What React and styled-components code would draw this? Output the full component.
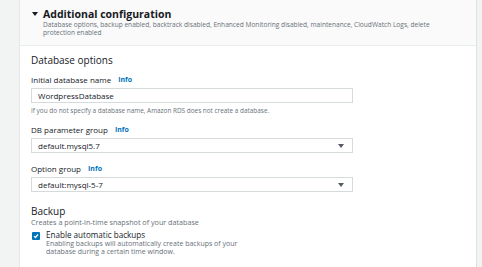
import styled, { createGlobalStyle } from "styled-components";

const GlobalStyle = createGlobalStyle`
  html, body {
    margin: 0;
    padding: 0;
    background: #f2f3f3;
  }
  body {
    font-family: "Open Sans", "Liberation Sans", sans-serif;
    color: #16191f;
  }
`;

const Page = styled.div`
  display: flex;
  width: 482px;
  height: 267px;
  overflow: hidden;
`;

const Gutter = styled.div`
  width: ${(props) => props.w}px;
  flex-shrink: 0;
  background: #f2f3f3;
`;

const Panel = styled.div`
  flex: 1;
  background: #ffffff;
  border-left: 1px solid #e4e7e7;
  border-right: 1px solid #dfe2e2;
`;

const Header = styled.div`
  height: 46px;
  box-sizing: border-box;
  background: #fafafa;
  border-bottom: 1px solid #eaeded;
  padding: 7px 12px 0 12px;
  display: flex;
  gap: 5px;
`;

const Caret = styled.span`
  width: 0;
  height: 0;
  margin-top: 5px;
  border-left: 3px solid transparent;
  border-right: 3px solid transparent;
  border-top: 4px solid #16191f;
`;

const HeaderText = styled.div`
  display: flex;
  flex-direction: column;
`;

const Title = styled.div`
  font-size: 10.5px;
  font-weight: 700;
  line-height: 14px;
`;

const Description = styled.div`
  font-size: 6.6px;
  line-height: 8px;
  color: #687078;
  width: 420px;
`;

const Body = styled.div`
  padding: 7px 12px 0 11px;
  display: flex;
  flex-direction: column;
`;

const SectionTitle = styled.div`
  font-size: 10px;
  line-height: 14px;
  margin-top: ${(props) => props.mt || 0}px;
`;

const Label = styled.div`
  font-size: 8px;
  line-height: 10px;
  margin-top: ${(props) => props.mt || 0}px;
  display: flex;
  align-items: center;
  gap: 7px;
`;

const Info = styled.span`
  color: #0073bb;
  font-weight: 700;
  font-size: 7px;
`;

const Field = styled.div`
  width: 322px;
  height: 15px;
  box-sizing: border-box;
  margin-top: 3px;
  border: 1px solid #d5dbdb;
  background: #fff;
  display: flex;
  align-items: center;
  justify-content: space-between;
  padding: 0 8px 0 6px;
  font-size: 8px;
`;

const SelectArrow = styled.span`
  width: 0;
  height: 0;
  border-left: 3px solid transparent;
  border-right: 3px solid transparent;
  border-top: 4px solid #545b64;
`;

const Hint = styled.div`
  font-size: ${(props) => props.fs || 6.4}px;
  line-height: 8px;
  color: #687078;
  margin-top: ${(props) => props.mt || 0}px;
`;

const CheckRow = styled.div`
  display: flex;
  gap: 6px;
  margin-top: 4px;
`;

const Box = styled.span`
  width: 8px;
  height: 8px;
  margin: 2px 0 0 1px;
  border-radius: 1px;
  background: #0073bb;
  display: flex;
  align-items: center;
  justify-content: center;
`;

const CheckText = styled.div`
  display: flex;
  flex-direction: column;
`;

const CheckLabel = styled.div`
  font-size: 8.1px;
  line-height: 10px;
`;

export default function App() {
  return (
    <>
      <GlobalStyle />
      <Page>
        <Gutter w={19} />
        <Panel>
          <Header>
            <Caret />
            <HeaderText>
              <Title>Additional configuration</Title>
              <Description>
                Database options, backup enabled, backtrack disabled, Enhanced
                Monitoring disabled, maintenance, CloudWatch Logs, delete
                protection enabled
              </Description>
            </HeaderText>
          </Header>
          <Body>
            <SectionTitle>Database options</SectionTitle>
            <Label mt={8}>
              Initial database name <Info>Info</Info>
            </Label>
            <Field>WordpressDatabase</Field>
            <Hint mt={4}>
              If you do not specify a database name, Amazon RDS does not create
              a database.
            </Hint>
            <Label mt={10}>
              DB parameter group <Info>Info</Info>
            </Label>
            <Field>
              default.mysql5.7
              <SelectArrow />
            </Field>
            <Label mt={11}>
              Option group <Info>Info</Info>
            </Label>
            <Field>
              default:mysql-5-7
              <SelectArrow />
            </Field>
            <SectionTitle mt={12}>Backup</SectionTitle>
            <Hint fs={7.2}>Creates a point-in-time snapshot of your database</Hint>
            <CheckRow>
              <Box>
                <svg width="6" height="6" viewBox="0 0 6 6">
                  <path
                    d="M1 3.1 L2.4 4.5 L5 1.5"
                    fill="none"
                    stroke="#fff"
                    strokeWidth="1.2"
                  />
                </svg>
              </Box>
              <CheckText>
                <CheckLabel>Enable automatic backups</CheckLabel>
                <Hint fs={7}>
                  Enabling backups will automatically create backups of your
                  <br />
                  database during a certain time window.
                </Hint>
              </CheckText>
            </CheckRow>
          </Body>
        </Panel>
        <Gutter w={5} />
      </Page>
    </>
  );
}
